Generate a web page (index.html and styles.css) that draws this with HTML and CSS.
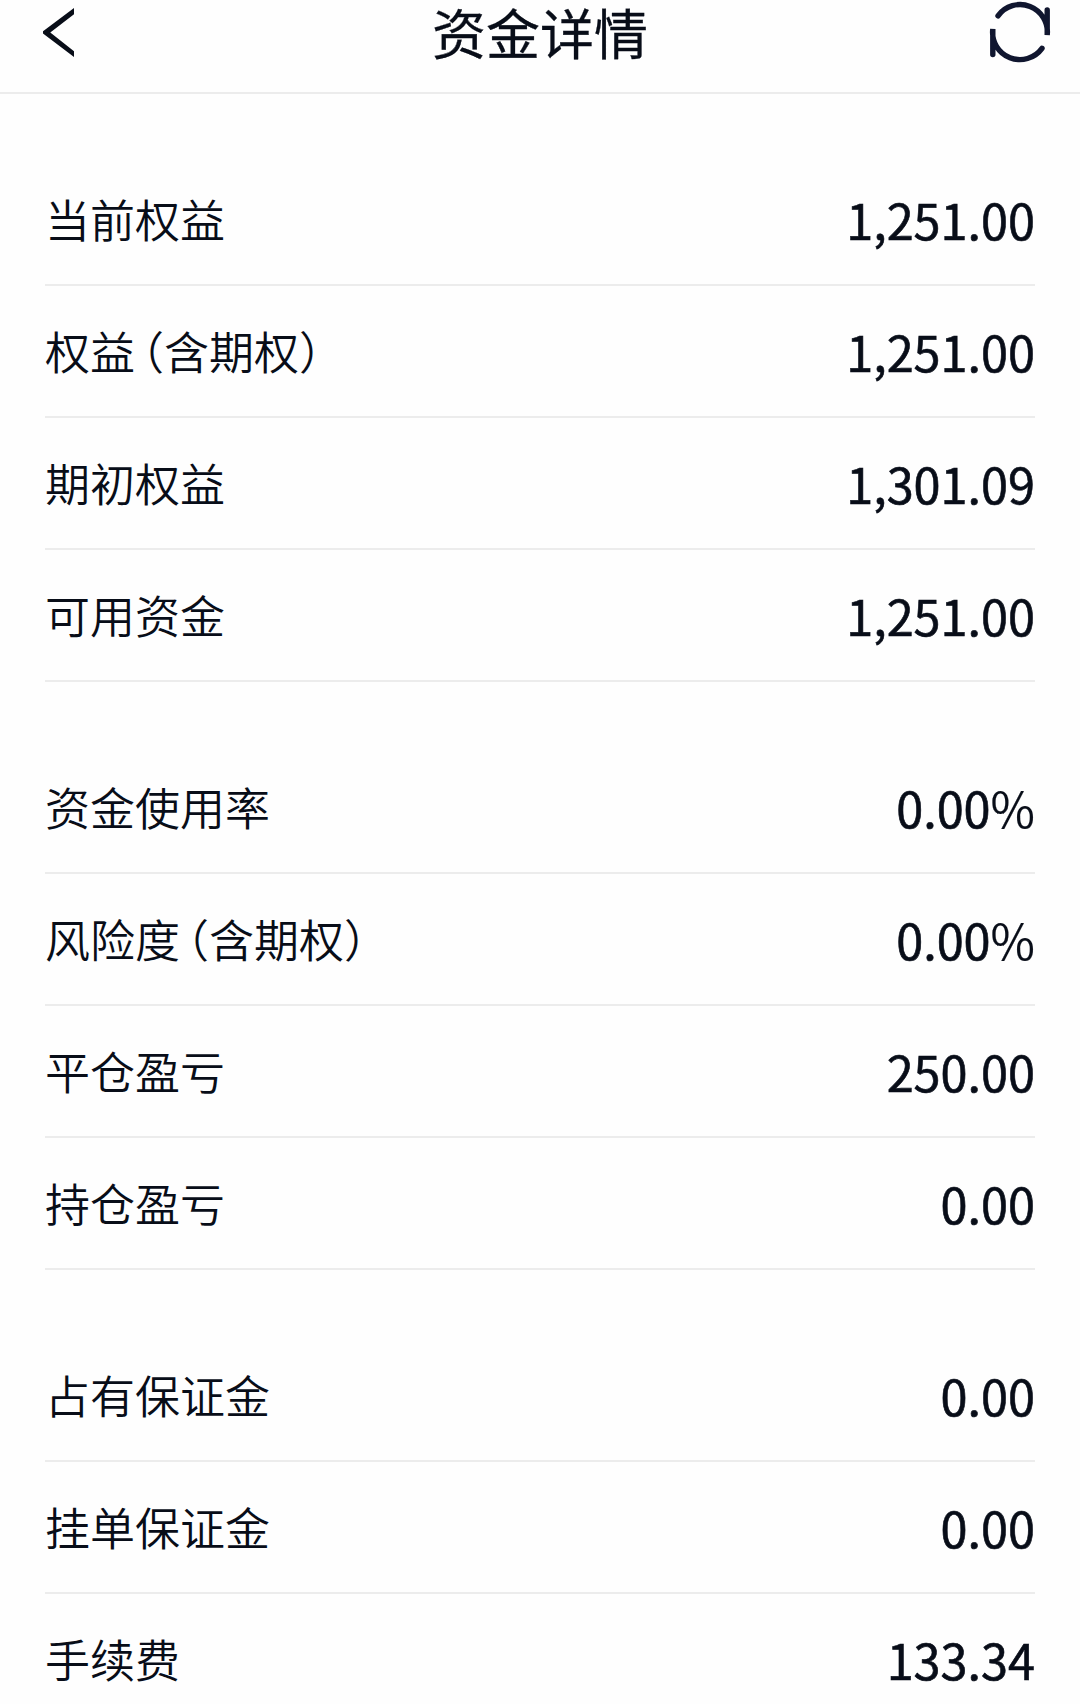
FILE: index.html
```html
<!DOCTYPE html>
<html lang="zh-CN">
<head>
    <meta charset="UTF-8">
    <meta name="viewport" content="width=device-width, initial-scale=1.0">
    <title>资金详情</title>
    <link rel="stylesheet" href="styles.css">
</head>
<body>
    <header class="header">
        <button class="icon-btn" aria-label="返回">
            <svg class="back-icon" width="32" height="50" viewBox="0 0 32 50">
                <path d="M31 0 L0 23.2 V25.6 L31 49 V43.2 L7.3 24.4 L31 6.2 Z" fill="#080d18"/>
            </svg>
        </button>
        <h1>资金详情</h1>
        <button class="icon-btn" aria-label="刷新">
            <svg class="refresh-icon" width="60" height="62" viewBox="0 0 60 62" fill="none" stroke="#10162f" stroke-width="5.4" stroke-linecap="round">
                <path d="M8 15.8 A27.3 27.3 0 0 1 57.2 35 V10"/>
                <path d="M52 48.3 A27.3 27.3 0 0 1 2.8 29 V54.5"/>
            </svg>
        </button>
    </header>

    <main class="content">
        <section class="group">
            <div class="row"><span class="label">当前权益</span><span class="value">1,251.00</span></div>
            <div class="row"><span class="label">权益<span class="paren-open">（</span>含期权）</span><span class="value">1,251.00</span></div>
            <div class="row"><span class="label">期初权益</span><span class="value">1,301.09</span></div>
            <div class="row"><span class="label">可用资金</span><span class="value">1,251.00</span></div>
        </section>

        <section class="group">
            <div class="row"><span class="label">资金使用率</span><span class="value">0.00<span class="percent">%</span></span></div>
            <div class="row"><span class="label">风险度<span class="paren-open">（</span>含期权）</span><span class="value">0.00<span class="percent">%</span></span></div>
            <div class="row"><span class="label">平仓盈亏</span><span class="value">250.00</span></div>
            <div class="row"><span class="label">持仓盈亏</span><span class="value">0.00</span></div>
        </section>

        <section class="group">
            <div class="row"><span class="label">占有保证金</span><span class="value">0.00</span></div>
            <div class="row"><span class="label">挂单保证金</span><span class="value">0.00</span></div>
            <div class="row"><span class="label">手续费</span><span class="value">133.34</span></div>
        </section>
    </main>
</body>
</html>
```
FILE: styles.css
```css
* {
    margin: 0;
    padding: 0;
    box-sizing: border-box;
}

body {
    font-family: "Noto Sans CJK SC", sans-serif;
    background: #fefefe;
    color: #080d18;
    height: 1704px;
    overflow: hidden;
}

.header {
    display: flex;
    justify-content: space-between;
    align-items: flex-start;
    height: 94px;
    border-bottom: 2px solid #ececec;
}

.header h1 {
    font-size: 54px;
    font-weight: 400;
    line-height: 64px;
    -webkit-text-stroke: 0.3px #080d18;
}

.icon-btn {
    display: flex;
    width: 120px;
    background: none;
    border: none;
}

.back-icon {
    margin: 8px 0 0 43px;
}

.refresh-icon {
    margin: 0 0 0 30px;
    overflow: visible;
}

.content {
    padding: 0 45px;
}

.group {
    padding-top: 60px;
}

.row {
    display: flex;
    justify-content: space-between;
    align-items: center;
    height: 132px;
    border-bottom: 2px solid #ececec;
}

.label {
    font-size: 45px;
    font-weight: 350;
    line-height: 66px;
    white-space: nowrap;
}

/* half-width form of the opening bracket */
.paren-open {
    margin-left: 6.5px;
    font-feature-settings: "halt";
}

.value {
    font-size: 48.6px;
    font-weight: 400;
    line-height: 70px;
    -webkit-text-stroke: 0.6px #080d18;
}

.percent {
    font-weight: 350;
    -webkit-text-stroke: 0.2px #080d18;
}
```
